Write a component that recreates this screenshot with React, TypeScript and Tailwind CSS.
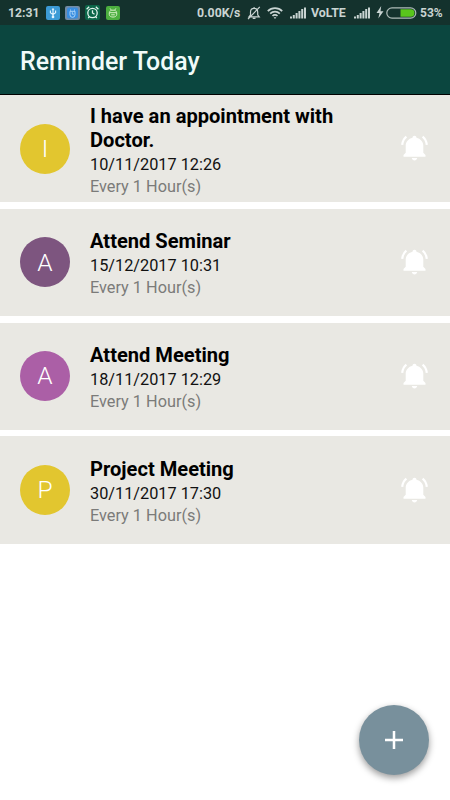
import React from "react";

const reminders = [
  { id: 1, title: "I have an appointment with Doctor.", date: "10/11/2017 12:26", repeat: "Every 1 Hour(s)", letter: "I", color: "bg-[#e2c62f]" },
  { id: 2, title: "Attend Seminar", date: "15/12/2017 10:31", repeat: "Every 1 Hour(s)", letter: "A", color: "bg-[#7d557f]" },
  { id: 3, title: "Attend Meeting", date: "18/11/2017 12:29", repeat: "Every 1 Hour(s)", letter: "A", color: "bg-[#ab5fa6]" },
  { id: 4, title: "Project Meeting", date: "30/11/2017 17:30", repeat: "Every 1 Hour(s)", letter: "P", color: "bg-[#e2c62f]" },
];

function Signal() {
  return (
    <svg className="w-4 h-3 shrink-0" viewBox="0 0 16 12" fill="#c9d4d2">
      <rect x="0" y="9.5" width="2" height="2" />
      <rect x="2.8" y="8" width="2" height="3.5" />
      <rect x="5.6" y="6" width="2" height="5.5" />
      <rect x="8.4" y="4" width="2" height="7.5" />
      <rect x="11.2" y="2" width="2" height="9.5" />
      <rect x="14" y="0.5" width="2" height="11" />
    </svg>
  );
}

function Bell() {
  return (
    <svg className="ml-auto w-[27px] h-[27px] shrink-0" viewBox="0 0 27 27" fill="#fff">
      <path d="M13.5.8c1.2 0 2 .8 2 1.9 4 1 6.8 4 6.8 8v7l2.2 2.4v1.6h-22v-1.6l2.2-2.4v-7c0-4 2.8-7 6.8-8 0-1.1.8-1.9 2-1.9z" />
      <path d="M10.8 23h5.4c-.3 1.5-1.3 2.5-2.7 2.5s-2.4-1-2.7-2.5z" />
      <path d="M5.4 1.6C2.9 3.5 1.6 6.2 1.2 9.8M21.6 1.6c2.5 1.9 3.8 4.6 4.2 8.2" fill="none" stroke="#fff" strokeWidth="2.2" />
    </svg>
  );
}

function StatusBar() {
  return (
    <div className="h-[25px] bg-[#14322d] flex items-center text-[#c9d4d2] text-[12px] font-bold whitespace-nowrap">
      <span className="ml-2 w-[38px] text-[12.2px] pt-px">12:31</span>
      <svg className="w-[14px] h-[14px]" viewBox="0 0 14 14" fill="none" stroke="#e6f5ff" strokeWidth="1.1">
        <rect width="14" height="14" rx="2" fill="#3c9bd6" stroke="none" />
        <path d="M7 2.6v8.4M4.4 4.6v2.2L7 8.6l2.6-1.8V4.6" />
        <circle cx="7" cy="10.9" r="0.8" fill="#e6f5ff" />
        <path d="M6 3.8l1-1.4 1 1.4z" fill="#e6f5ff" strokeWidth="0.4" />
      </svg>
      <svg className="w-[15px] h-[14px] ml-[5px]" viewBox="0 0 15 14" fill="none">
        <rect width="15" height="14" rx="2" fill="#718ba5" />
        <rect x="2" y="1.5" width="11" height="11" rx="2" fill="#388de0" />
        <path d="M5 3.7l1 .8M10 3.7l-1 .8M5 5.3h5v3.5a2.5 2.5 0 0 1-5 0zM7.3 6.2v2h1.6" stroke="#b9dcfb" strokeWidth="0.9" />
      </svg>
      <svg className="w-[15px] h-[15px] ml-[5px]" viewBox="0 0 15 15" fill="none" stroke="#e4f4ee" strokeWidth="1.3">
        <rect width="15" height="15" rx="2" fill="#0b6548" stroke="none" />
        <circle cx="7.5" cy="8" r="4.7" />
        <path d="M7.5 5.3V8l2 1.3M1.6 4.2l2.6-2.4M13.4 4.2l-2.6-2.4M4.4 11.6l-1.2 1.6M10.6 11.6l1.2 1.6" />
      </svg>
      <svg className="w-[14px] h-[14px] ml-[6px]" viewBox="0 0 14 14" fill="none" stroke="#d6efc5" strokeWidth="1">
        <rect width="14" height="14" rx="2" fill="#4caf3f" stroke="none" />
        <path d="M4.1 2.4l1.3 1.8M9.9 2.4L8.6 4.2M3.3 6.7c0-3.4 7.4-3.4 7.4 0zM3.3 7v1.5c0 3.4 7.4 3.4 7.4 0V7" />
        <path d="M5.2 8.8h3.6" />
      </svg>

      <span className="ml-[77px] w-[50px] pt-px text-[12.3px]">0.00K/s</span>
      <svg className="w-[14px] h-[14px]" viewBox="0 0 14 14" fill="none" stroke="#c9d4d2" strokeWidth="1.2">
        <path d="M2 10.8h10.2l-1.5-1.9V6.1c0-2.3-1.4-3.8-3.6-3.8S3.5 3.8 3.5 6.1v2.8zM7.1 1v1.3M5.7 12.4h2.8M1 13.2L12.8.8" />
      </svg>
      <svg className="w-4 h-3 ml-[6px]" viewBox="0 0 16 12" fill="none" stroke="#c9d4d2" strokeWidth="1.7">
        <path d="M.8 4.2a10.2 10.2 0 0 1 14.4 0M3.2 6.7a6.8 6.8 0 0 1 9.6 0M5.5 9a3.5 3.5 0 0 1 5 0" />
        <path d="M8 12L6.6 10.3h2.8z" fill="#c9d4d2" stroke="none" />
      </svg>
      <div className="ml-[7px] flex"><Signal /></div>
      <span className="ml-[5px] w-[43px] pt-px text-[12.4px]">VoLTE</span>
      <Signal />
      <svg className="w-[8px] h-[13px] ml-[6px]" viewBox="0 0 8 13" fill="#c9d4d2">
        <path d="M5.2 0L.5 7h3L2.3 12.5 7.5 5.2h-3z" />
      </svg>
      <svg className="w-[31px] h-3 ml-[2px]" viewBox="0 0 31 12">
        <rect x="0.8" y="0.8" width="29" height="10.4" rx="5.2" fill="none" stroke="#aebcb8" strokeWidth="1.2" />
        <path d="M14.5 2.3h10.3a3.7 3.7 0 0 1 0 7.4H14.5z" fill="#59c51c" />
      </svg>
      <span className="ml-[3px] pt-px text-[12px]">53%</span>
    </div>
  );
}

export default function App() {
  return (
    <main className="relative h-[800px] w-[450px] overflow-hidden bg-white font-['Roboto',sans-serif]">
      <StatusBar />
      <header className="h-[70px] bg-[#0b463f] border-b border-black flex items-center px-5">
        <h1 className="text-[24.9px] font-medium text-[#f0fbf9] pt-[4px]">Reminder Today</h1>
      </header>

      <div className="flex flex-col gap-[6.5px]">
        {reminders.map((item) => (
          <div key={item.id} className="group h-[107.3px] bg-[#e9e8e3] flex items-center pl-5 pr-[22px]">
            <div className={`size-[50px] shrink-0 rounded-full flex items-center justify-center pt-px text-white text-[24.5px] font-light ${item.color}`}>
              {item.letter}
            </div>
            <div className="ml-5 w-[270px] pt-[3.4px] group-first:pt-[5px]">
              <p className="text-[20.1px] leading-6 font-bold text-black">{item.title}</p>
              <p className="text-[16.3px] leading-[22px] pt-[2px] text-[#111]">{item.date}</p>
              <p className="text-[16.3px] leading-[22px] text-[#7b7b79]">{item.repeat}</p>
            </div>
            <Bell />
          </div>
        ))}
      </div>

      <button aria-label="Add reminder" className="absolute left-[359px] top-[705px] size-[70px] rounded-full bg-[#78909c] shadow-[0_3px_7px_rgba(0,0,0,0.4)] flex items-center justify-center">
        <svg className="size-[18px]" viewBox="0 0 18 18" stroke="#fff" strokeWidth="2.5">
          <path d="M9 0v18M0 9h18" />
        </svg>
      </button>
    </main>
  );
}
